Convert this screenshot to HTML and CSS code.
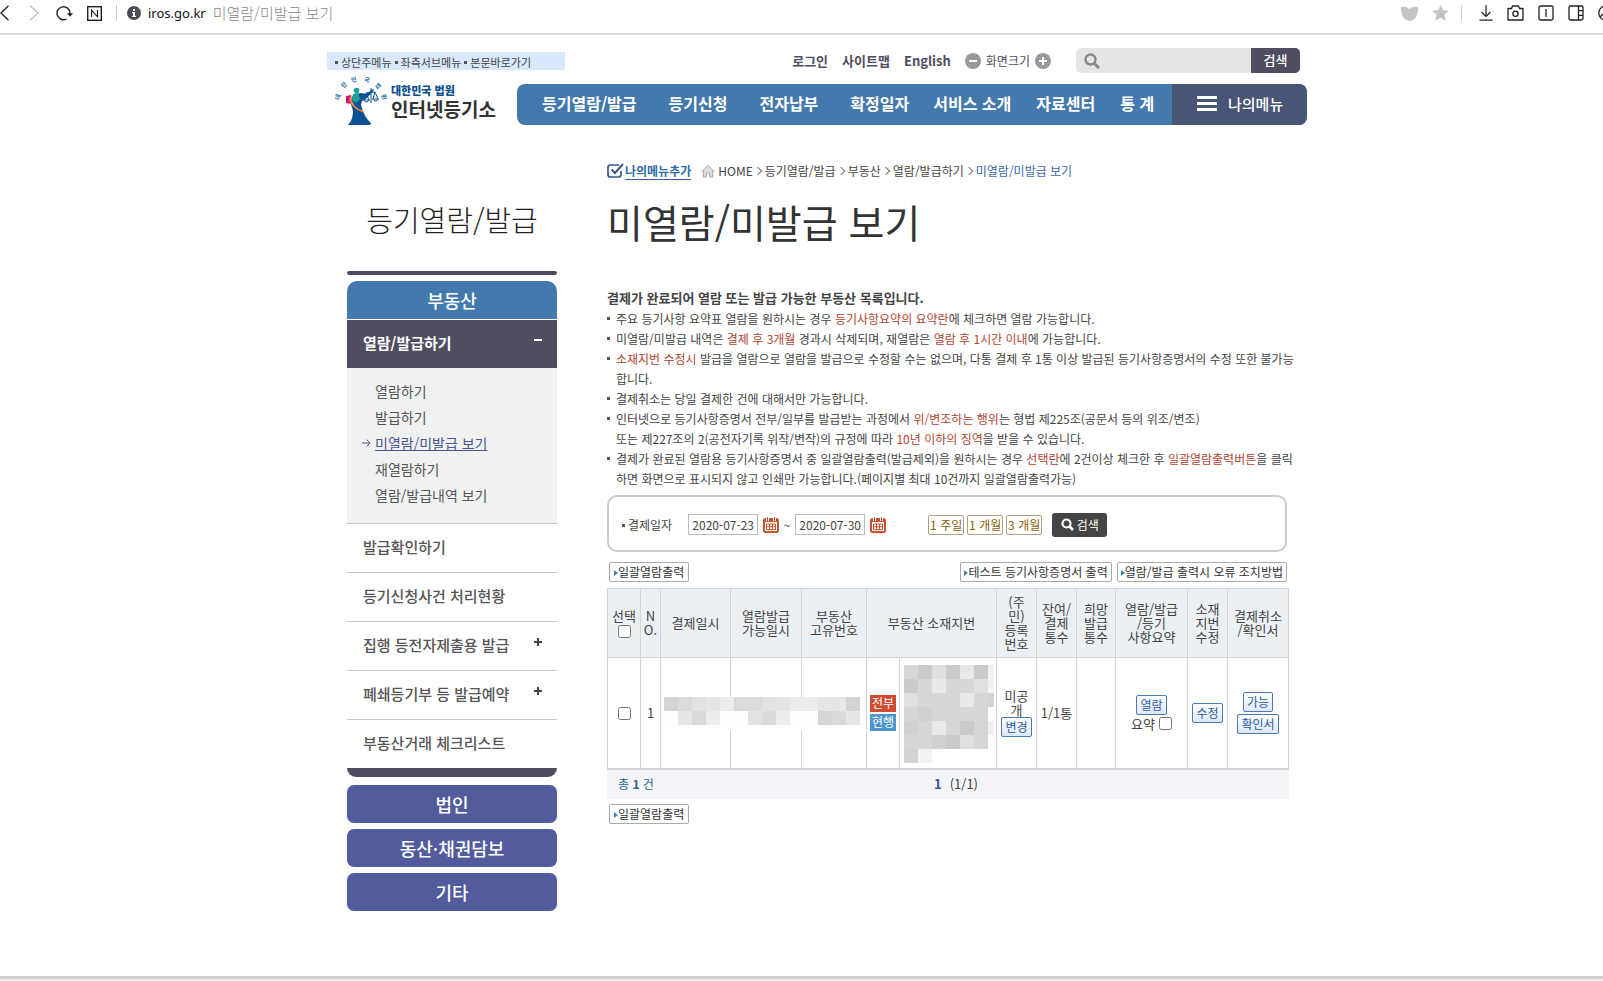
FILE: index.html
```html
<!DOCTYPE html>
<html lang="ko">
<head>
  <meta charset="UTF-8" />
  <meta name="viewport" content="width=device-width, initial-scale=1.0"/>
  <title>미열람/미발급 보기</title>
  <link rel="stylesheet" href="styles.css">
</head>
<body>
  <!-- 주소창 -->
  <div class="browser-bar">
    <div class="browser-left">
      <svg class="ico-back" width="10" height="16" viewBox="0 0 10 16" fill="none" stroke="#222" stroke-width="1.3"><path d="M8.5 .8L1 8l7.500 7.200"/></svg>
      <svg class="ico-forward" width="10" height="16" viewBox="0 0 10 16" fill="none" stroke="#bbb" stroke-width="1.2"><path d="M1 .8L9 8l-8 7.200"/></svg>
      <svg class="ico-reload" width="17" height="16" viewBox="0 0 17 16" fill="none" stroke="#222" stroke-width="1.4"><path d="M10.500 14A6.500 6.500 0 1 1 14 8v2"/><path d="M11 8.300h6l-3 3.500z" fill="#222" stroke="none"/></svg>
      <svg class="ico-n" width="15" height="15" viewBox="0 0 15 15" fill="none" stroke="#222"><rect x=".7" y=".7" width="13.600" height="13.600" stroke-width="1.400"/><path d="M4.500 11V4.200l6 6.600V4" stroke-width="1.200"/></svg>
      <i class="bar-sep"></i>
      <svg class="ico-info" width="14" height="14" viewBox="0 0 14 14"><circle cx="7" cy="7" r="7" fill="#4a4f57"/><path d="M6 3h2v2H6zM5 6h3v4h1v1H5v-1h1V7H5z" fill="#fff"/></svg>
      <span class="host">iros.go.kr</span>
      <span class="page-name">미열람/미발급 보기</span>
    </div>
    <div class="browser-right">
      <svg width="17" height="15" viewBox="0 0 17 15"><path d="M0 1q5-1 8.500 2Q12-0 17 1q.5 13-8.500 14Q-.5 14 0 1z" fill="#c4c4c4"/></svg>
      <svg class="ico-star" width="17" height="16" viewBox="0 0 17 16"><path d="M8.500 0l2.400 5.300 6 .5-4.500 4 1.400 6-5.300-3.100L3.200 15.800l1.400-6L.1 5.800l6-.5z" fill="#c4c4c4"/></svg>
      <i class="bar-sep"></i>
      <svg class="ico-down" width="14" height="16" viewBox="0 0 14 16" fill="none" stroke="#222" stroke-width="1.200"><path d="M7 0v11.500M2.500 7L7 11.500 11.500 7M.5 15.200h13"/></svg>
      <svg width="17" height="16" viewBox="0 0 17 16" fill="none" stroke="#222" stroke-width="1.300"><path d="M1 3.500h3.500l1-2.500h6l1 2.500H16v11.500H1z" stroke-linejoin="round"/><circle cx="8.500" cy="8.700" r="2.600"/></svg>
      <svg width="16" height="16" viewBox="0 0 16 16" fill="none" stroke="#222" stroke-width="1.300"><rect x="1" y="1" width="14" height="14" rx="1.500"/><path d="M8 4v8"/></svg>
      <svg width="16" height="16" viewBox="0 0 16 16" fill="none" stroke="#222" stroke-width="1.300"><rect x="1" y="1" width="14" height="14" rx="1.500"/><path d="M10.500 1v14M10.500 5.700H15M10.500 10.300H15"/></svg>
      <svg width="5" height="16" viewBox="0 0 5 16" fill="none" stroke="#222" stroke-width="1.300"><circle cx="8" cy="8" r="7.200"/><path d="M2 12l3-3"/></svg>
    </div>
  </div>

  <div class="page">
    <header>
      <div class="top-row">
        <div class="skip">
          <a href="#gnb">상단주메뉴</a>
          <a href="#lnb">좌측서브메뉴</a>
          <a href="#content">본문바로가기</a>
        </div>
        <div class="util">
          <a href="#">로그인</a>
          <a href="#">사이트맵</a>
          <a href="#">English</a>
          <div class="zoom-size">
            <button type="button" aria-label="축소"><svg width="16" height="16" viewBox="0 0 16 16"><circle cx="8" cy="8" r="8" fill="#999"/><path d="M4 8h8" stroke="#fff" stroke-width="2"/></svg></button>
            <span>화면크기</span>
            <button type="button" aria-label="확대"><svg width="16" height="16" viewBox="0 0 16 16"><circle cx="8" cy="8" r="8" fill="#999"/><path d="M4 8h8M8 4v8" stroke="#fff" stroke-width="2"/></svg></button>
          </div>
          <form class="site-search">
            <svg width="16" height="16" viewBox="0 0 16 16" fill="none" stroke="#888"><circle cx="6.500" cy="6.500" r="5" stroke-width="2.400"/><path d="M10 10l5 5" stroke-width="3"/></svg>
            <input type="text" aria-label="통합검색">
            <button type="button">검색</button>
          </form>
        </div>
      </div>
      <div class="nav-row">
        <a href="#" class="logo">
          <svg width="54" height="50" viewBox="0 0 54 50">
            <g class="emblem-text">
              <text x="4" y="24" transform="rotate(-75 4 22)">대</text>
              <text x="10" y="12" transform="rotate(-48 10 10)">한</text>
              <text x="20" y="7" transform="rotate(-14 20 5)">민</text>
              <text x="33" y="7" transform="rotate(14 33 5)">국</text>
              <text x="44" y="13" transform="rotate(48 44 11)">법</text>
              <text x="50" y="24" transform="rotate(75 50 22)">원</text>
            </g>
            <path d="M20 19l7-1 5 1 7-5 1 1-7 8-5 3-1 4q3 12 10 18 0 2-3 2H14q5-5 5-14l-3-10z" fill="#0b5394"/>
            <circle cx="22.500" cy="15.500" r="2.800" fill="#18a090"/>
            <path d="M19 19l5-1 2 6-4 4-4-3z" fill="#18a090"/>
            <path d="M12 21l5-1 1 9-6-1z" fill="#d4147e"/>
            <path d="M17 21q1 12 13 15l-1 1.500Q18 34 15 24z" fill="#f08a3c"/>
            <g fill="none" stroke="#0b5394"><path d="M37 13v15M32 18l9-1M32 18l-2 7M32 18l3 7M41 17l-2 7M41 17l3 7"/><path d="M29.500 25h6q-3 4-6 0zM38.500 24h6q-3 4-6 0z"/></g>
          </svg>
          <span class="logo-text"><span>대한민국 법원</span><strong>인터넷등기소</strong></span>
        </a>
        <nav class="gnb" id="gnb">
          <div class="gnb-wide">
            <a href="#">등기열람/발급</a>
            <a href="#">등기신청</a>
            <a href="#">전자납부</a>
            <a href="#">확정일자</a>
          </div>
          <div class="gnb-tight">
            <a href="#">서비스 소개</a>
            <a href="#">자료센터</a>
            <a href="#">통 계</a>
          </div>
          <a href="#" class="my-menu"><svg width="20" height="15" viewBox="0 0 20 15"><path d="M0 1.500h20M0 7.500h20M0 13.500h20" stroke="#fff" stroke-width="3"/></svg>나의메뉴</a>
        </nav>
      </div>
    </header>

    <div class="container">
      <!-- 좌측 메뉴 -->
      <aside class="sidebar" id="lnb">
        <h2>등기열람/발급</h2>
        <div class="side-bar-line"></div>
        <a href="#" class="side-head">부동산</a>
        <a href="#" class="side-open">열람/발급하기<svg width="8" height="8" viewBox="0 0 8 8"><path d="M0 4h8" stroke="#fff" stroke-width="2"/></svg></a>
        <ul class="side-sub">
          <li><a href="#">열람하기</a></li>
          <li><a href="#">발급하기</a></li>
          <li class="on"><svg width="9" height="8" viewBox="0 0 9 8" fill="none" stroke="#4c5590"><path d="M0 4h8M4.500 .5L8 4 4.500 7.500"/></svg><a href="#">미열람/미발급 보기</a></li>
          <li><a href="#">재열람하기</a></li>
          <li><a href="#">열람/발급내역 보기</a></li>
        </ul>
        <ul class="side-menu">
          <li><a href="#">발급확인하기</a></li>
          <li><a href="#">등기신청사건 처리현황</a></li>
          <li><a href="#">집행 등전자제출용 발급<svg width="8" height="8" viewBox="0 0 8 8"><path d="M0 4h8M4 0v8" stroke="#444" stroke-width="2"/></svg></a></li>
          <li><a href="#">폐쇄등기부 등 발급예약<svg width="8" height="8" viewBox="0 0 8 8"><path d="M0 4h8M4 0v8" stroke="#444" stroke-width="2"/></svg></a></li>
          <li><a href="#">부동산거래 체크리스트</a></li>
        </ul>
        <div class="side-end"></div>
        <a href="#" class="side-btn">법인</a>
        <a href="#" class="side-btn">동산·채권담보</a>
        <a href="#" class="side-btn">기타</a>
      </aside>

      <!-- 본문 -->
      <main class="content" id="content">
        <div class="location">
          <a href="#" class="add-menu"><svg width="17" height="16" viewBox="0 0 17 16" fill="none" stroke="#35588f"><path d="M12 2H3.500Q1 2 1 4.500v7Q1 14 3.500 14h8q2.500 0 2.500-2.500V8" stroke-width="1.700"/><path d="M4.500 6.500L8 10l8-9" stroke-width="2"/></svg><span>나의메뉴추가</span></a>
          <svg width="14" height="14" viewBox="0 0 14 14" fill="#ddd" stroke="#aaa"><path d="M.8 7.500L7 1.200l6.200 6.300H11.500v5.500h-3V9h-3v4h-3V7.500z"/></svg>
          <ol>
            <li><a href="#">HOME</a></li>
            <li><a href="#">등기열람/발급</a></li>
            <li><a href="#">부동산</a></li>
            <li><a href="#">열람/발급하기</a></li>
            <li><a href="#" class="current">미열람/미발급 보기</a></li>
          </ol>
        </div>
        <h1>미열람/미발급 보기</h1>

        <p class="guide-title">결제가 완료되어 열람 또는 발급 가능한 부동산 목록입니다.</p>
        <ul class="guide">
          <li>주요 등기사항 요약표 열람을 원하시는 경우 <em>등기사항요약의 요약란</em>에 체크하면 열람 가능합니다.</li>
          <li>미열람/미발급 내역은 <em>결제 후 3개월</em> 경과시 삭제되며, 재열람은 <em>열람 후 1시간 이내</em>에 가능합니다.</li>
          <li><em>소재지번 수정시</em> 발급을 열람으로 열람을 발급으로 수정할 수는 없으며, 다통 결제 후 1통 이상 발급된 등기사항증명서의 수정 또한 불가능<br>합니다.</li>
          <li>결제취소는 당일 결제한 건에 대해서만 가능합니다.</li>
          <li>인터넷으로 등기사항증명서 전부/일부를 발급받는 과정에서 <em>위/변조하는 행위</em>는 형법 제225조(공문서 등의 위조/변조)<br>또는 제227조의 2(공전자기록 위작/변작)의 규정에 따라 <em>10년 이하의 징역</em>을 받을 수 있습니다.</li>
          <li>결제가 완료된 열람용 등기사항증명서 중 일괄열람출력(발급제외)을 원하시는 경우 <em>선택란</em>에 2건이상 체크한 후 <em>일괄열람출력버튼</em>을 클릭<br>하면 화면으로 표시되지 않고 인쇄만 가능합니다.(페이지별 최대 10건까지 일괄열람출력가능)</li>
        </ul>

        <form class="search-box">
          <label for="dateFrom">결제일자</label>
          <input type="text" id="dateFrom" value="2020-07-23">
          <button type="button" class="cal" aria-label="시작일 선택"><svg width="16" height="16" viewBox="0 0 16 16"><rect x="1" y="2" width="14" height="13" rx="1.500" fill="#fff" stroke="#c4552e" stroke-width="2"/><path d="M1 3h14v2H1z" fill="#c4552e"/><path d="M4.500 0v4M11.500 0v4" stroke="#fff" stroke-width="3"/><path d="M4.500 0v4M11.500 0v4M3.500 7h9v5.500h-9zM3.500 9.700h9M6.500 7v5.500M9.500 7v5.500" stroke="#c4552e" fill="none"/></svg></button>
          <span class="tilde">~</span>
          <input type="text" id="dateTo" value="2020-07-30" aria-label="종료일">
          <button type="button" class="cal" aria-label="종료일 선택"><svg width="16" height="16" viewBox="0 0 16 16"><rect x="1" y="2" width="14" height="13" rx="1.500" fill="#fff" stroke="#c4552e" stroke-width="2"/><path d="M1 3h14v2H1z" fill="#c4552e"/><path d="M4.500 0v4M11.500 0v4" stroke="#fff" stroke-width="3"/><path d="M4.500 0v4M11.500 0v4M3.500 7h9v5.500h-9zM3.500 9.700h9M6.500 7v5.500M9.500 7v5.500" stroke="#c4552e" fill="none"/></svg></button>
          <div class="terms">
            <button type="button">1 주일</button>
            <button type="button">1 개월</button>
            <button type="button">3 개월</button>
          </div>
          <button type="button" class="submit"><svg width="13" height="13" viewBox="0 0 13 13" fill="none" stroke="#fff"><circle cx="5.500" cy="5.500" r="4" stroke-width="2.200"/><path d="M8.500 8.500L12 12" stroke-width="2.600"/></svg>검색</button>
        </form>

        <div class="btn-row">
          <button type="button" class="btn">일괄열람출력</button>
          <div class="btn-right">
            <button type="button" class="btn">테스트 등기사항증명서 출력</button>
            <button type="button" class="btn">열람/발급 출력시 오류 조치방법</button>
          </div>
        </div>

        <table class="list">
          <colgroup>
            <col class="w33"><col class="w20"><col class="w70"><col class="w71"><col class="w65"><col class="w33"><col>
            <col class="w40"><col class="w40"><col class="w39"><col class="w72"><col class="w40"><col class="w61">
          </colgroup>
          <thead>
            <tr>
              <th><label for="checkAll">선택</label><input type="checkbox" id="checkAll"></th>
              <th>N<br>O.</th>
              <th>결제일시</th>
              <th>열람발급<br>가능일시</th>
              <th>부동산<br>고유번호</th>
              <th colspan="2">부동산 소재지번</th>
              <th>(주<br>민)<br>등록<br>번호</th>
              <th>잔여/<br>결제<br>통수</th>
              <th>희망<br>발급<br>통수</th>
              <th>열람/발급<br>/등기<br>사항요약</th>
              <th>소재<br>지번<br>수정</th>
              <th>결제취소<br>/확인서</th>
            </tr>
          </thead>
          <tbody>
            <tr>
              <td><input type="checkbox" aria-label="1번 선택"></td>
              <td>1</td>
              <td class="masked">
                <svg class="mask-wide" width="200" height="33" viewBox="0 0 200 33" stroke-width="14" shape-rendering="crispEdges">
                  <path d="M0 0h200v33H0z" fill="#fdfdfd"/>
                  <path d="M0 7h14M182 7h14" stroke="#d3d3d5"/>
                  <path d="M14 7h14M70 7h28M28 21h14M98 21h14M168 21h14" stroke="#dadadc"/>
                  <path d="M154 21h14" stroke="#d6d6d8"/>
                  <path d="M28 7h14M98 7h14M84 21h14" stroke="#e2e2e3"/>
                  <path d="M42 7h14M112 7h14M154 7h28M14 21h14M182 21h14" stroke="#e6e6e7"/>
                  <path d="M56 7h14M126 7h28M42 21h14M112 21h14" stroke="#ededed"/>
                </svg>
              </td>
              <td></td>
              <td></td>
              <td class="kinds"><span class="kind all">전부</span><span class="kind now">현행</span></td>
              <td class="masked">
                <svg class="mask-tall" width="90" height="98" viewBox="0 0 90 98" stroke-width="14" shape-rendering="crispEdges">
                  <path d="M0 0h84v84H0z" fill="#d6d6d7"/>
                  <path d="M14 7h14M42 7h14M70 7h14M0 21h14M42 77h14M56 63h14" stroke="#cbcbcc"/>
                  <path d="M28 7h14M70 21h14M0 35h14M56 77h14" stroke="#dfdfe0"/>
                  <path d="M56 7h14M28 21h14M56 35h14M28 63h14" stroke="#e8e8e9"/>
                  <path d="M14 49h14M0 63h14M28 77h14" stroke="#d0d0d1"/>
                  <path d="M84 7h6M84 21h6M84 63h6M14 91h14" stroke="#f2f2f2"/>
                  <path d="M84 35h6M0 91h14" stroke="#d3d3d4"/>
                </svg>
              </td>
              <td>미공<br>개<button type="button" class="mini">변경</button></td>
              <td>1/1통</td>
              <td></td>
              <td><button type="button" class="mini">열람</button><span class="summary"><label for="sum1">요약</label><input type="checkbox" id="sum1"></span></td>
              <td><button type="button" class="mini">수정</button></td>
              <td><div class="stack"><button type="button" class="mini">가능</button><button type="button" class="mini">확인서</button></div></td>
            </tr>
          </tbody>
        </table>
        <div class="paging">
          <span class="total">총 <b>1</b> 건</span>
          <span class="pages"><b>1</b>(1/1)</span>
        </div>
        <div class="btn-row bottom">
          <button type="button" class="btn">일괄열람출력</button>
        </div>
      </main>
    </div>
  </div>
  <div class="bottom-line"></div>
</body>
</html>
```
FILE: styles.css
```css
* {
  box-sizing: border-box;
}

body {
  margin: 0;
  min-height: 100vh;
  display: flex;
  flex-direction: column;
  font-family: "Noto Sans CJK KR", sans-serif;
  font-size: 12px;
  line-height: 20px;
  color: #444;
  background: #fff;
}

a {
  color: inherit;
  text-decoration: none;
}

ul, ol {
  list-style: none;
  margin: 0;
  padding: 0;
}

h1, h2, p {
  margin: 0;
  font-weight: 400;
}

button, input {
  font-family: inherit;
  font-size: 12px;
  padding: 0;
  margin: 0;
}

button {
  cursor: pointer;
}

svg {
  display: block;
  flex: none;
}

/* 주소창 */
.browser-bar {
  display: flex;
  justify-content: space-between;
  height: 35px;
  padding-bottom: 7px;
  border-bottom: 2px solid #ddd;
  overflow: hidden;
}

.browser-left, .browser-right {
  display: flex;
  align-items: center;
}

.ico-forward {
  margin-left: 19px;
}

.ico-reload {
  margin-left: 17px;
}

.ico-n {
  margin: 0 14px;
}

.bar-sep {
  width: 1px;
  height: 16px;
  background: #ccc;
}

.ico-info {
  margin: 0 7px 0 10px;
}

.host {
  font-family: "Noto Sans", "Noto Sans CJK KR", sans-serif;
  font-size: 13px;
  color: #111;
}

.page-name {
  margin-left: 7px;
  font-size: 15px;
  font-weight: 300;
  color: #888;
}

.browser-right {
  gap: 14px;
}

.ico-star {
  margin-right: -2px;
}

.ico-down {
  margin-left: 3px;
}

/* 상단 */
.page {
  flex: 1;
  width: 100%;
  padding-left: 31px;
}

header, .container {
  max-width: 980px;
  margin: 0 auto;
}

.top-row {
  display: flex;
  justify-content: space-between;
  height: 40px;
  padding-right: 7px;
}

.skip {
  display: flex;
  gap: 3px;
  width: 238px;
  height: 18px;
  margin-top: 17px;
  padding-left: 8px;
  line-height: 20px;
  background: #d9e8fc;
  white-space: nowrap;
}

.skip a {
  font-size: 11px;
}

.skip a::before, .search-box label::before {
  content: '';
  display: inline-block;
  width: 3px;
  height: 3px;
  margin-right: 3px;
  background: #555;
  vertical-align: 3px;
}

.util {
  display: flex;
  align-items: center;
  gap: 14px;
  height: 25px;
  margin-top: 13px;
  font-size: 13px;
  line-height: 18px;
  font-weight: 700;
  color: #4f4d5f;
}

.zoom-size {
  display: flex;
  align-items: center;
  gap: 5px;
  margin-right: 11px;
  font-size: 12px;
  font-weight: 400;
}

.zoom-size button {
  border: none;
  background: none;
}

.site-search {
  display: flex;
  align-items: center;
  width: 224px;
  height: 25px;
  padding-left: 8px;
  background: #e5e5e5;
  border-radius: 5px;
  overflow: hidden;
}

.site-search input {
  flex: 1;
  min-width: 0;
  height: 25px;
  border: none;
  background: none;
}

.site-search button {
  width: 49px;
  height: 25px;
  padding-bottom: 2px;
  border: none;
  background: #4f4d5f;
  color: #fff;
  font-size: 13px;
  font-weight: 500;
}

.nav-row {
  display: flex;
  align-items: flex-end;
}

.logo {
  display: flex;
  width: 190px;
  padding-left: 7px;
}

.logo svg {
  overflow: visible;
}

.emblem-text {
  font-size: 6px;
  font-weight: 700;
  fill: #2a6a9c;
  text-anchor: middle;
}

.logo-text {
  display: flex;
  flex-direction: column;
  padding: 6px 0 0 3px;
  font-size: 11px;
  font-weight: 900;
  line-height: 18px;
  color: #0b4f8f;
  white-space: nowrap;
}

.logo-text strong {
  font-size: 19px;
  font-weight: 700;
  line-height: 20px;
  color: #333;
}

.gnb {
  flex: 1;
  display: flex;
  height: 41px;
  padding-left: 25px;
  line-height: 38px;
  font-size: 16px;
  font-weight: 700;
  color: #fff;
  background: #4479ad;
  border-radius: 8px;
  overflow: hidden;
  white-space: nowrap;
}

.gnb-wide, .gnb-tight {
  display: flex;
  gap: 32px;
}

.gnb-tight {
  gap: 25px;
  margin-left: 24px;
}

.my-menu {
  display: flex;
  align-items: center;
  gap: 11px;
  width: 135px;
  margin-left: auto;
  padding: 0 0 2px 25px;
  font-size: 15px;
  font-weight: 500;
  background: #495575;
}

/* 본문 틀 */
.container {
  display: flex;
  gap: 50px;
  padding: 0 18px 40px 20px;
}

.sidebar {
  width: 210px;
  flex: none;
  padding-top: 74px;
}

.sidebar h2 {
  margin-bottom: 32px;
  font-size: 29px;
  line-height: 40px;
  font-weight: 300;
  text-align: center;
  color: #222;
}

.side-bar-line {
  height: 4px;
  margin-bottom: 6px;
  border-radius: 2px;
  background: #4f4d5f;
}

.side-head, .side-btn {
  display: block;
  height: 38px;
  line-height: 38px;
  font-size: 18px;
  font-weight: 500;
  text-align: center;
  color: #fff;
}

.side-head {
  background: #4479ad;
  border-radius: 10px 10px 0 0;
}

.side-open {
  display: flex;
  justify-content: space-between;
  height: 48px;
  margin-top: 1px;
  padding: 0 15px 0 16px;
  line-height: 46px;
  font-size: 15px;
  font-weight: 700;
  color: #fff;
  background: #4f4d5f;
}

.side-open svg, .side-menu svg {
  margin-top: 16px;
}

.side-sub {
  padding: 10px 0 15px;
  background: #f0f2f2;
  font-size: 14px;
  line-height: 26px;
  color: #555;
}

.side-sub li {
  display: flex;
  align-items: center;
  padding-left: 28px;
}

.side-sub .on {
  gap: 4px;
  padding-left: 15px;
  color: #4c5590;
}

.side-sub .on a {
  text-decoration: underline;
}

.side-menu a {
  display: flex;
  justify-content: space-between;
  height: 49px;
  padding: 0 15px 0 16px;
  border-top: 1px solid #c8c8cc;
  line-height: 46px;
  font-size: 15px;
  font-weight: 500;
  color: #555;
}

.side-end {
  height: 9px;
  margin-bottom: 8px;
  background: #4f4d5f;
  border-radius: 0 0 10px 10px;
}

.side-btn {
  margin-bottom: 6px;
  background: #525b9c;
  border-radius: 7px;
}

.content {
  flex: 1;
  min-width: 0;
  padding-top: 36px;
}

.location {
  display: flex;
  align-items: center;
  white-space: nowrap;
}

.add-menu {
  display: flex;
  align-items: center;
  gap: 1px;
  margin-right: 10px;
  font-weight: 700;
  color: #2f6ba8;
}

.add-menu span {
  line-height: 16px;
  border-bottom: 1px solid #2f6ba8;
}

.location ol {
  display: flex;
  margin-left: 3px;
}

.location li + li::before {
  content: '';
  display: inline-block;
  width: 5px;
  height: 5px;
  margin: 0 4px 0 2px;
  border: solid #777;
  border-width: 1px 1px 0 0;
  transform: rotate(45deg);
  vertical-align: 2px;
}

.location .current {
  color: #3a67a8;
}

h1 {
  margin-top: 15px;
  font-size: 39px;
  line-height: 50px;
  color: #333;
}

.guide-title {
  margin-top: 42px;
  font-size: 13px;
  font-weight: 700;
}

.guide {
  margin-top: 1px;
  white-space: nowrap;
}

.guide li {
  position: relative;
  padding-left: 9px;
}

.guide li::before {
  content: '';
  position: absolute;
  left: 0;
  top: 8px;
  width: 3px;
  height: 3px;
  background: #555;
}

.guide em {
  font-style: normal;
  color: #b0452f;
}

.search-box {
  display: flex;
  align-items: center;
  height: 57px;
  margin: 6px 2px 10px 0;
  padding: 2px 0 0 13px;
  border: 2px solid #ccc;
  border-radius: 10px;
}

.search-box label {
  margin-right: 16px;
}

.search-box input {
  width: 70px;
  height: 21px;
  border: 1px solid #bbb;
  text-align: center;
  color: #444;
}

.cal {
  margin-left: 5px;
  border: none;
  background: none;
}

.tilde {
  width: 16px;
  text-align: center;
}

.terms {
  display: flex;
  gap: 3px;
  margin: 0 10px 0 42px;
}

.terms button {
  width: 36px;
  height: 20px;
  border: 1px solid #aaa08a;
  border-radius: 2px;
  background: #fffef8;
  color: #8a6010;
  line-height: 16px;
  white-space: nowrap;
}

.submit {
  display: flex;
  align-items: center;
  justify-content: center;
  gap: 3px;
  width: 55px;
  height: 24px;
  border: none;
  border-radius: 3px;
  background: #444;
  color: #fff;
}

.btn-row {
  display: flex;
  justify-content: space-between;
  margin: 0 2px 6px;
}

.btn-right {
  display: flex;
  gap: 5px;
}

.btn {
  height: 20px;
  padding: 0 4px;
  border: 1px solid #aaa;
  border-radius: 2px;
  background: #fff;
  color: #333;
  line-height: 18px;
  white-space: nowrap;
}

.btn-right .btn {
  padding: 0 3px;
}

.btn::before {
  content: '';
  display: inline-block;
  border: 3px solid transparent;
  border-left: 4px solid #3d84b8;
  border-right: none;
  vertical-align: 1px;
}

/* 목록 */
.list {
  width: 100%;
  table-layout: fixed;
  border-collapse: collapse;
  font-size: 13px;
  line-height: 14px;
  text-align: center;
}

.w20 { width: 20px; }
.w33 { width: 33px; }
.w39 { width: 39px; }
.w40 { width: 40px; }
.w61 { width: 61px; }
.w65 { width: 65px; }
.w70 { width: 70px; }
.w71 { width: 71px; }
.w72 { width: 72px; }

.list th, .list td {
  padding: 0;
  border: 1px solid #d3d3d9;
}

.list th {
  height: 69px;
  font-weight: 400;
  background: #eaf0f4;
}

.list td {
  height: 111px;
}

.list tbody td {
  border-bottom: 2px solid #d3d3d9;
}

.list input {
  display: block;
  width: 13px;
  height: 13px;
  margin: 2px auto 0;
}

.masked {
  position: relative;
}

.mask-wide, .mask-tall {
  position: absolute;
}

.mask-wide {
  left: 3px;
  top: 39px;
}

.mask-tall {
  left: 4px;
  top: 7px;
}

.kind {
  display: block;
  width: 26px;
  height: 17px;
  margin: 2px auto;
  line-height: 16px;
  font-size: 12px;
  color: #fff;
}

.all {
  background: #cf4b32;
}

.now {
  background: #4f94cd;
}

.mini {
  height: 20px;
  padding: 0 3px;
  border: 1px solid #4a7ab5;
  border-radius: 2px;
  background: linear-gradient(#fff, #dce8fa);
  color: #2c5ba5;
  line-height: 18px;
}

.summary {
  display: flex;
  justify-content: center;
  align-items: center;
  gap: 4px;
  margin-top: 2px;
}

.summary input {
  margin: 0;
}

.stack {
  display: flex;
  flex-direction: column;
  align-items: center;
  gap: 2px;
}

.paging {
  display: flex;
  align-items: center;
  height: 29px;
  padding-left: 11px;
  background: #f4f5f8;
}

.total {
  width: 316px;
  color: #2a6590;
}

.pages {
  font-size: 13px;
}

.pages b {
  margin-right: 8px;
  color: #35549c;
}

.bottom {
  margin-top: 5px;
}

.bottom-line {
  height: 5px;
  border-top: 3px solid #cfcfcf;
  background: #eee;
}
```
